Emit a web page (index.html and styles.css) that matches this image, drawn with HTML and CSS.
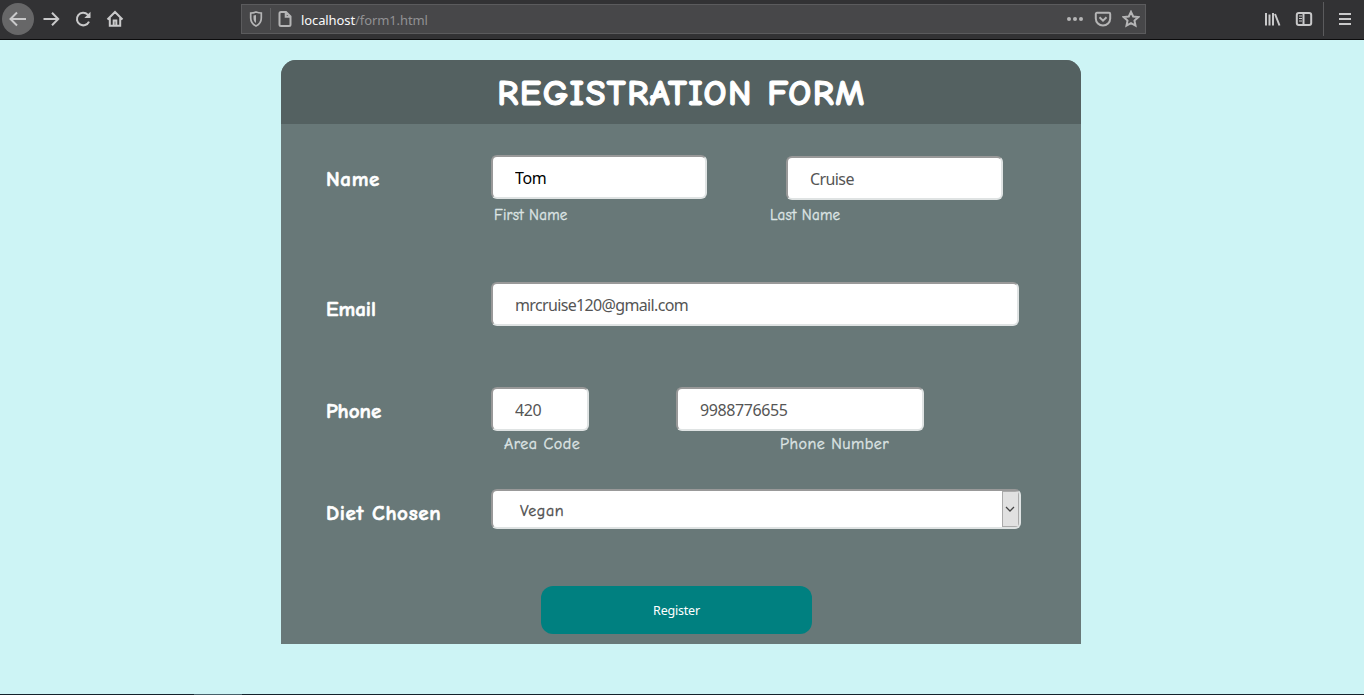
FILE: index.html
```html
<!DOCTYPE html>
<html lang="en">
<head>
<meta charset="utf-8">
<title>Registration Form</title>
<link rel="stylesheet" href="styles.css">
</head>
<body>
<header class="toolbar">
  <nav class="nav">
    <span class="back"><svg width="32" height="32" viewBox="0 0 32 32"><path d="M24 16H9M15 9.500L8.500 16l6.500 6.500"/></svg></span>
    <svg width="20" height="20" viewBox="0 0 20 20"><path d="M2.500 10H17M11 3.800L17.200 10 11 16.200"/></svg>
    <svg width="20" height="20" viewBox="0 0 20 20"><path d="M16 12.600A6.300 6.300 0 1 1 14.700 5.600L16.500 7.400"/><path class="solid" d="M17.500 2.800V9h-6.200z"/></svg>
    <svg width="20" height="20" viewBox="0 0 20 20"><path d="M2.500 10.500L10 3l7.500 7.500M4.800 9v7.700h10.400V9M8.700 16.500v-5h2.600v5"/></svg>
  </nav>
  <div class="address">
    <svg class="shield" width="16" height="18" viewBox="0 0 16 18"><path d="M8 2c2 .7 3.700 1 5.300 1v5c0 3.500-1.600 6.200-5.300 8-3.700-1.800-5.300-4.500-5.300-8V3C4.300 3 6 2.700 8 2z"/><path class="solid" d="M8 5v8C6.300 12 5.500 10.500 5.500 8V5.500z"/></svg>
    <span class="divider"></span>
    <svg class="page" width="16" height="18" viewBox="0 0 16 18"><path d="M3.500 2H9l4.500 4.500v8q0 1.500-1.500 1.500H4q-1.500 0-1.500-1.500V3.500Q2.500 2 4 2M8.700 2.300v4.500h4.500"/></svg>
    <span class="url"><span class="host">localhost</span>/form1.html</span>
    <span class="address-actions">
      <svg width="18" height="18" viewBox="0 0 18 18"><g class="solid"><circle cx="3" cy="9" r="2"/><circle cx="9" cy="9" r="2"/><circle cx="15" cy="9" r="2"/></g></svg>
      <svg width="18" height="18" viewBox="0 0 18 18"><path d="M3 2.800h12q1.200 0 1.200 1.200v4.500a7.200 7 0 0 1-14.400 0V4Q1.800 2.800 3 2.800zM5.500 7.200L9 10.600l3.500-3.400"/></svg>
      <svg width="18" height="18" viewBox="0 0 18 18"><path d="M9 1.800l2.200 4.700 5.100.6-3.800 3.500 1 5.100L9 13.200l-4.500 2.500 1-5.100-3.800-3.500 5.100-.6z"/></svg>
    </span>
  </div>
  <div class="tools">
    <svg width="18" height="18" viewBox="0 0 18 18"><path d="M3 3v12.500M6.500 4.500v11M10 3v12.500M12 4l4.500 11.500"/></svg>
    <svg width="18" height="18" viewBox="0 0 18 18"><rect x="1.800" y="3" width="14.400" height="12" rx="2"/><path d="M8.500 3v12"/><path class="thin" d="M4 6h3M4 8.500h3M4 11h3"/></svg>
    <span class="tool-divider"></span>
    <svg width="14" height="18" viewBox="0 0 14 18"><path d="M1 4h12M1 9h12M1 14h12"/></svg>
  </div>
</header>
<main class="content">
  <form class="card">
    <h1 class="title"><span>REGISTRATION FORM</span></h1>
    <div class="row row-name">
      <label class="label label-name">Name</label>
      <div class="fields">
        <div class="inputs inputs-name">
          <input class="input active" type="text" value="Tom">
          <input class="input lower" type="text" value="Cruise">
        </div>
        <div class="captions captions-name"><span class="first">First Name</span><span class="last">Last Name</span></div>
      </div>
    </div>
    <div class="row row-email">
      <label class="label label-email">Email</label>
      <div class="fields"><input class="input email" type="text" value="mrcruise120@gmail.com"></div>
    </div>
    <div class="row row-phone">
      <label class="label label-phone">Phone</label>
      <div class="fields">
        <div class="inputs inputs-phone">
          <input class="input area" type="text" value="420">
          <input class="input number" type="text" value="9988776655">
        </div>
        <div class="captions captions-phone"><span class="code">Area Code</span><span class="phone">Phone Number</span></div>
      </div>
    </div>
    <div class="row row-diet">
      <label class="label label-diet">Diet Chosen</label>
      <div class="select"><span class="choice">Vegan</span><span class="arrow"><svg width="10" height="8" viewBox="0 0 10 8"><path d="M1 2l4 4 4-4"/></svg></span></div>
    </div>
    <button class="register" type="button">Register</button>
  </form>
</main>
<footer class="edge"><span class="edge-light"></span></footer>
</body>
</html>
```
FILE: styles.css
```css
* { box-sizing: border-box; }
body {
  margin: 0;
  height: 695px;
  display: flex;
  flex-direction: column;
  overflow: hidden;
  background: #cdf4f5;
  font-family: "Comic Sans MS", "Comic Neue", Lato, sans-serif;
}
svg { display: block; flex: none; fill: none; stroke: #c9c9ca; stroke-width: 2; }
.solid { fill: #c9c9ca; stroke: none; }
.thin { stroke-width: 1; }

.toolbar {
  flex: none;
  height: 40px;
  display: flex;
  background: #323234;
  border-bottom: 1px solid #0c0c0d;
}
.nav { width: 241px; height: 38px; padding-left: 2px; display: flex; align-items: center; gap: 12px; }
.back { width: 32px; height: 32px; margin-right: -5px; border-radius: 50%; background: #676768; }
.address {
  width: 905px;
  height: 30px;
  margin-top: 4px;
  padding: 0 5px 0 6px;
  display: flex;
  align-items: center;
  background: #474749;
  border: 1px solid #5b5b5d;
}
.address svg { stroke: #b5b5b6; }
.address .solid { fill: #b5b5b6; stroke: none; }
.address .shield { stroke-width: 1.7; }
.divider { width: 1px; height: 22px; margin: 0 6px; background: #606062; }
.url { margin-left: 8px; padding-top: 1px; font: 13px "Noto Sans", sans-serif; letter-spacing: -0.1px; color: #919193; white-space: nowrap; }
.host { color: #f9f9fa; }
.address-actions { margin-left: auto; display: flex; gap: 10px; }
.tools { height: 38px; margin-left: 117px; display: flex; align-items: center; gap: 14px; }
.tool-divider { width: 1px; height: 34px; margin: 0 0 0 -4px; background: #5b5b5d; }

.content { flex: 1; padding-left: 281px; padding-top: 20px; }
.card { width: 800px; height: 584px; background: #687878; border-radius: 15px 15px 0 0; overflow: hidden; }
.title {
  height: 64px;
  margin: 0 0 31px;
  padding: 2px 0 0 1px;
  display: flex;
  align-items: center;
  justify-content: center;
  background: #546161;
  color: #fff;
  font-size: 36px;
  letter-spacing: 1.5px;
  -webkit-text-stroke: 1.1px #fff;
}
.row { display: flex; align-items: flex-start; padding-left: 45px; }
.row-name { height: 127px; }
.row-email { height: 105px; }
.row-phone { height: 102px; }
.row-diet { height: 97px; }
.label { width: 165px; padding-top: 12px; color: #fff; font-size: 21px; line-height: 25px; font-weight: 700; white-space: nowrap; -webkit-text-stroke: 0.6px #fff; }
.label-name, .label-diet { letter-spacing: 0.65px; }
.row-email .label { padding-top: 15px; }
.inputs { display: flex; align-items: flex-start; }
.inputs-name { gap: 79px; }
.inputs-phone { gap: 87px; }
.input {
  display: block;
  width: 216px;
  height: 44px;
  margin: 0;
  padding: 2px 22px 0;
  border: 2px solid;
  border-color: #999 #dfe3e3 #dfe3e3 #999;
  border-radius: 6px;
  background: #fff;
  color: #555;
  font: 16px "Noto Sans", sans-serif;
  letter-spacing: -0.4px;
  outline: none;
}
.active { color: #000; }
.lower { width: 217px; margin-top: 1px; letter-spacing: -0.6px; }
.email { width: 528px; letter-spacing: -0.65px; }
.area { width: 98px; }
.number { width: 248px; }
.captions { display: flex; color: #dde4e4; line-height: 20px; white-space: nowrap; -webkit-text-stroke: 0.35px #dde4e4; }
.captions-name { padding: 5px 0 0 3px; font-size: 15px; letter-spacing: 0.25px; }
.captions-phone { padding: 3px 0 0 13px; font-size: 16px; letter-spacing: 0.5px; }
.first, .last, .code, .phone { flex: none; }
.first { width: 276px; }
.code { width: 276px; }
.select {
  width: 530px;
  height: 40px;
  padding-left: 27px;
  display: flex;
  align-items: center;
  justify-content: space-between;
  border: 2px solid;
  border-color: #999 #dfe3e3 #dfe3e3 #999;
  border-radius: 6px;
  background: #fff;
  overflow: hidden;
  color: #505050;
  font-size: 16px;
}
.choice { padding-top: 3px; letter-spacing: 0.6px; -webkit-text-stroke: 0.35px #505050; }
.arrow { width: 17px; height: 36px; padding-right: 2px; display: flex; align-items: center; justify-content: center; background: #e1e1e1; border: 1px solid #aaa; }
.arrow svg { stroke: #444; stroke-width: 1.3; }
.register {
  display: block;
  width: 271px;
  height: 48px;
  margin: 0 0 0 260px;
  padding: 0;
  border: 0;
  border-radius: 12px;
  background: #008080;
  color: #fff;
  font: 12.500px "Noto Sans", sans-serif;
  letter-spacing: -0.2px;
}
.edge { flex: none; height: 1px; padding-left: 194px; background: #14222b; }
.edge-light { display: block; width: 48px; height: 1px; background: #48616a; }
```
